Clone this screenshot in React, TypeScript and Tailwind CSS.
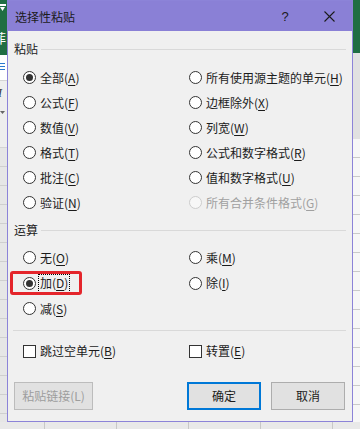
import React from "react";

const FONT = "font-['Noto_Sans_CJK_SC','Noto_Sans',sans-serif]";

function Radio({ checked = false, disabled = false }: { checked?: boolean; disabled?: boolean }) {
  return (
    <span
      className={
        disabled
          ? "w-[13px] h-[13px] rounded-full border border-[#cdcdcd] bg-[#f7f7f7] flex items-center justify-center shrink-0"
          : "w-[13px] h-[13px] rounded-full border border-[#333333] bg-white flex items-center justify-center shrink-0"
      }
    >
      {checked && <span className="w-[7px] h-[7px] rounded-full bg-[#333333]" />}
    </span>
  );
}

function Label({ text, k }: { text: string; k: string }) {
  return (
    <span className="whitespace-nowrap">
      {text}(<span className="underline underline-offset-2">{k}</span>)
    </span>
  );
}

function RadioRow({
  text,
  k,
  checked,
  disabled,
  h = "h-[25px]",
}: {
  text: string;
  k: string;
  checked?: boolean;
  disabled?: boolean;
  h?: string;
}) {
  return (
    <div className={`flex items-center gap-[4px] ${h} ${disabled ? "text-[#a0a0a0]" : "text-[#1b1b1b]"}`}>
      <Radio checked={checked} disabled={disabled} />
      <Label text={text} k={k} />
    </div>
  );
}

function SectionHeader({ title }: { title: string }) {
  return (
    <div className="flex items-center gap-[3px] h-[18px]">
      <span className="text-[#1b1b1b] leading-[16px]">{title}</span>
      <span className="flex-1 h-px bg-[#d9d9d9]" />
    </div>
  );
}

function Checkbox() {
  return <span className="w-[13px] h-[13px] border border-[#333333] bg-white shrink-0" />;
}

function GridRows({ count, line }: { count: number; line: string }) {
  return (
    <>
      {Array.from({ length: count }).map((_, i) => (
        <div key={i} className={`h-[19px] shrink-0 border-b ${line}`} />
      ))}
    </>
  );
}

export default function App() {
  const pasteLeft = [
    { t: "全部", k: "A", c: true },
    { t: "公式", k: "F" },
    { t: "数值", k: "V" },
    { t: "格式", k: "T" },
    { t: "批注", k: "C" },
    { t: "验证", k: "N" },
  ];
  const pasteRight = [
    { t: "所有使用源主题的单元", k: "H" },
    { t: "边框除外", k: "X" },
    { t: "列宽", k: "W" },
    { t: "公式和数字格式", k: "R" },
    { t: "值和数字格式", k: "U" },
    { t: "所有合并条件格式", k: "G", d: true },
  ];

  return (
    <div className={`w-[360px] h-[429px] flex flex-col overflow-hidden bg-[#ececec] text-[12px] ${FONT}`}>
      <div className="flex h-[422px]">
        {/* left spreadsheet strip */}
        <div className="w-[7px] flex flex-col overflow-hidden">
          <div className="h-[55px] bg-[#1f6e43] flex flex-col overflow-hidden text-white">
            <div className="h-[4px]" />
            <div className="h-[2px] w-[6px] bg-white" />
            <div className="h-[4px] w-[5px] mt-[1px] bg-white [clip-path:polygon(0_0,100%_0,50%_100%)]" />
            <div className="mt-[20px] -ml-[7px] text-[13px] leading-[14px] whitespace-nowrap">菲</div>
          </div>
          <div className="h-[25px] bg-white flex flex-col overflow-hidden">
            <div className="mt-[8px] h-[1px] w-[5px] bg-[#2b79d0]" />
            <div className="mt-[2px] h-[1px] w-[5px] bg-[#2b79d0]" />
            <div className="mt-[2px] h-[1px] w-[5px] bg-[#2b79d0]" />
          </div>
          <div className="h-[68px] bg-[#eeeeee] border-t border-b border-[#d4d4d4] flex flex-col overflow-hidden">
            <div className="mt-[6px] -ml-[2px] text-[12px] leading-[12px] italic font-['Liberation_Serif',serif] text-[#333]">I</div>
            <div className="mt-[12px] w-[5px] h-[3px] bg-[#666] [clip-path:polygon(0_0,100%_0,50%_100%)]" />
          </div>
          <div className="flex-1 bg-[#e6e6e6] flex flex-col overflow-hidden">
            <GridRows count={15} line="border-[#cfcfcf]" />
          </div>
        </div>

        {/* dialog */}
        <div className="w-[346px] h-[422px] border border-[#8c83d8] bg-[#f0f0f0] flex flex-col">
          <div className="h-[30px] bg-[#8a80d6] flex items-center pl-[7px] pr-[15px] text-[#1b1b1b]">
            <span className="text-[12px] leading-[16px] mt-[1px]">选择性粘贴</span>
            <span className="ml-auto w-[16px] text-center text-[13px] leading-[16px] mt-[1px] font-['Liberation_Sans',sans-serif]">?</span>
            <span className="ml-[28px] w-[16px] h-[16px] flex items-center justify-center mt-[1px]">
              <svg width="11" height="11" viewBox="0 0 11 11">
                <path d="M0.5 0.5 L10.5 10.5 M10.5 0.5 L0.5 10.5" stroke="#1b1b1b" strokeWidth="1.1" fill="none" />
              </svg>
            </span>
          </div>

          <div className="flex-1 flex flex-col px-[6px]">
            <div className="mt-[9px]">
              <SectionHeader title="粘贴" />
            </div>
            <div className="mt-[7px] pl-[9px] grid grid-cols-[166px_1fr]">
              <div className="flex flex-col">
                {pasteLeft.map((r) => (
                  <RadioRow key={r.k} text={r.t} k={r.k} checked={r.c} />
                ))}
              </div>
              <div className="flex flex-col">
                {pasteRight.map((r) => (
                  <RadioRow key={r.k} text={r.t} k={r.k} disabled={r.d} />
                ))}
              </div>
            </div>

            <div className="mt-[6px]">
              <SectionHeader title="运算" />
            </div>
            <div className="mt-[6px] pl-[9px] grid grid-cols-[166px_1fr]">
              <div className="flex flex-col">
                <RadioRow text="无" k="O" h="h-[25.5px]" />
                <div className="relative flex items-center gap-[4px] h-[25.5px] text-[#1b1b1b]">
                  <span className="absolute left-[-13px] top-[0.5px] w-[72px] h-[24px] rounded-[3px] border-[3px] border-[#e4252b]" />
                  <Radio checked />
                  <span className="-ml-[2px] h-[19px] px-[1px] border border-dotted border-black flex items-center">
                    <Label text="加" k="D" />
                  </span>
                </div>
                <RadioRow text="减" k="S" h="h-[25.5px]" />
              </div>
              <div className="flex flex-col">
                <RadioRow text="乘" k="M" h="h-[25.5px]" />
                <RadioRow text="除" k="I" h="h-[25.5px]" />
              </div>
            </div>

            <div className="mt-[8.5px] h-px bg-[#d9d9d9] ml-[-1px]" />

            <div className="mt-[10px] h-[20px] pl-[9px] grid grid-cols-[166px_1fr] text-[#1b1b1b]">
              <div className="flex items-center gap-[4px]">
                <Checkbox />
                <Label text="跳过空单元" k="B" />
              </div>
              <div className="flex items-center gap-[4px]">
                <Checkbox />
                <Label text="转置" k="E" />
              </div>
            </div>

            <div className="mt-[21px] h-[28px] flex pr-[1px]">
              <div className="w-[79px] h-[28px] bg-[#e1e1e1] border border-[#bcbcbc] text-[#9d9d9d] flex items-center justify-center">
                粘贴链接(L)
              </div>
              <div className="ml-auto w-[74px] h-[28px] bg-[#e1e1e1] border-2 border-[#0078d7] text-[#1b1b1b] flex items-center justify-center">
                确定
              </div>
              <div className="ml-[10px] w-[74px] h-[28px] bg-[#e1e1e1] border border-[#adadad] text-[#1b1b1b] flex items-center justify-center">
                取消
              </div>
            </div>
          </div>
        </div>

        {/* right spreadsheet strip */}
        <div className="w-[7px] flex flex-col overflow-hidden">
          <div className="h-[53px] bg-[#1f6e43] shrink-0" />
          <div className="h-[86px] bg-[#e1e1e1] shrink-0" />
          <div className="flex-1 bg-[#f7f7f7] flex flex-col overflow-hidden">
            <GridRows count={15} line="border-[#cacaca]" />
          </div>
        </div>
      </div>

      {/* bottom strip */}
      <div className="h-[7px] flex bg-[#e9e9e9]">
        <div className="w-[45px] shrink-0 border-r border-[#c8c8c8]" />
        <div className="w-[72px] shrink-0 border-r border-[#c8c8c8]" />
        <div className="w-[72px] shrink-0 border-r border-[#c8c8c8]" />
        <div className="w-[72px] shrink-0 border-r border-[#c8c8c8]" />
        <div className="w-[72px] shrink-0 border-r border-[#c8c8c8]" />
        <div className="flex-1" />
      </div>
    </div>
  );
}
